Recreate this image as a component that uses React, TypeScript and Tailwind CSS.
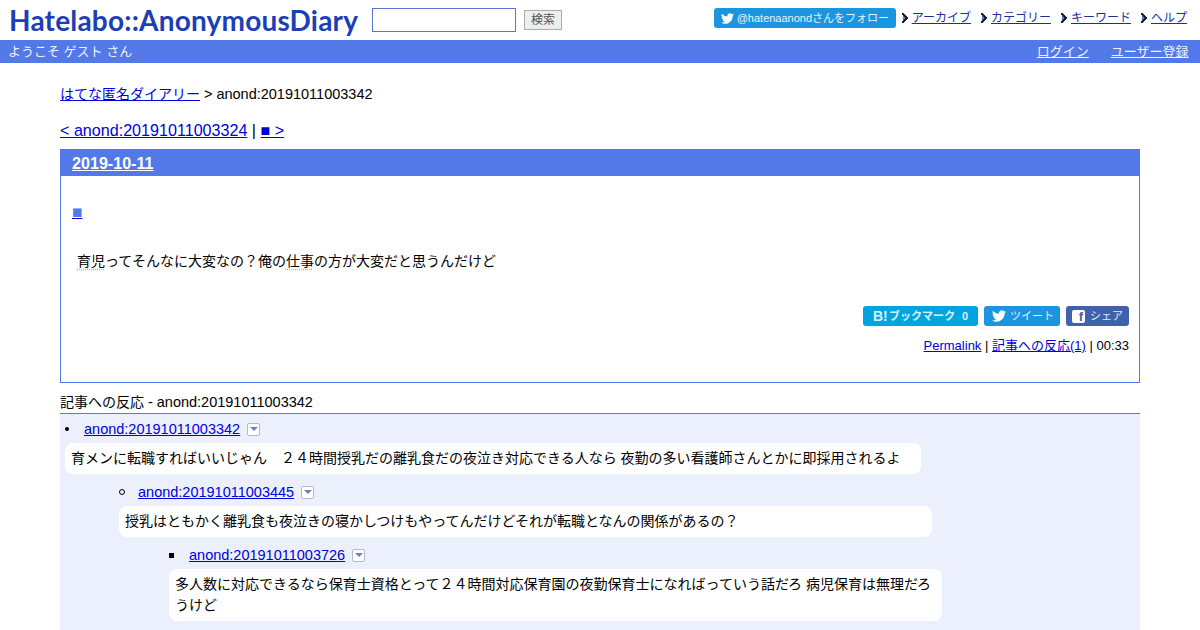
import React from "react";

const TwitterBird = ({ className }: { className?: string }) => (
  <svg viewBox="0 0 24 24" className={className} fill="currentColor">
    <path d="M23.95 4.57a10 10 0 0 1-2.82.77 4.96 4.96 0 0 0 2.16-2.72 9.9 9.9 0 0 1-3.12 1.19 4.92 4.92 0 0 0-8.38 4.48C7.69 8.1 4.07 6.13 1.64 3.16a4.82 4.82 0 0 0-.67 2.48c0 1.71.87 3.21 2.19 4.1a4.9 4.9 0 0 1-2.23-.62v.06a4.92 4.92 0 0 0 3.95 4.83 4.9 4.9 0 0 1-2.21.08 4.94 4.94 0 0 0 4.6 3.42A9.87 9.87 0 0 1 0 19.54a14 14 0 0 0 7.56 2.21c9.05 0 14-7.5 14-13.98 0-.21 0-.42-.02-.63a9.94 9.94 0 0 0 2.46-2.55z" />
  </svg>
);

// small pixel chevron used in front of the nav links
const Marker = () => (
  <svg viewBox="0 0 7 10" className="mr-[3px] h-[10px] w-[7px] shrink-0">
    <path d="M0 0h2v1h1v1h1v1h1v1h1v2h-1v1h-1v1h-1v1h-1v1h-2v-2h1v-1h1v-1h1v-2h-1v-1h-1v-1h-1z" fill="#222" />
    <path d="M1 3h1v1h1v2h-1v1h-1z" fill="#5279e7" />
  </svg>
);

const NavItem = ({ label }: { label: string }) => (
  <span className="flex items-center">
    <Marker />
    <a href="#" className="text-[#1a2f9c] underline">{label}</a>
  </span>
);

const Toggle = () => (
  <span className="ml-[7px] inline-flex h-[13px] w-[13px] items-center justify-center rounded-[2px] border border-[#b5b9cf] bg-white align-[-2px]">
    <span className="h-0 w-0 border-x-[4px] border-t-[4px] border-x-transparent border-t-[#6f7fc9]" />
  </span>
);

const ShareButton = ({ className, children }: { className: string; children: React.ReactNode }) => (
  <a href="#" className={`flex h-5 items-center rounded-[3px] text-white/85 ${className}`}>
    {children}
  </a>
);

const Keyword = ({ children }: { children: React.ReactNode }) => (
  <span className="underline decoration-[#bbb] decoration-dotted underline-offset-[3px]">{children}</span>
);

const Comment = ({ id, bullet, bulletWidth, children, className }: { id: string; bullet: React.ReactNode; bulletWidth: string; children: React.ReactNode; className: string }) => (
  <div className={className}>
    <div className="flex h-[20px] items-center">
      <span className={`flex shrink-0 items-center ${bulletWidth}`}>{bullet}</span>
      <a href="#" className="text-[14.5px] text-[#0000dd] underline">{id}</a>
      <Toggle />
    </div>
    {children}
  </div>
);

export default function App() {
  return (
    <div className="h-[630px] w-[1200px] overflow-hidden bg-white font-['Liberation_Sans','Noto_Sans_CJK_JP',sans-serif] text-[14px] leading-[20px] text-black">
      <header className="flex h-10 items-center justify-between pl-[9px] pr-[13px]">
        <div className="flex items-center">
          <a href="#" className="w-[350px] whitespace-nowrap font-['Lato',sans-serif] text-[28px] font-bold leading-[40px] tracking-[0.2px] text-[#1c3fb7]">
            Hatelabo::AnonymousDiary
          </a>
          <input className="ml-[13px] h-6 w-36 border border-[#5c76c9] bg-white" aria-label="search" />
          <button className="ml-2 flex h-5 w-[38px] items-center justify-center border border-[#aaa] bg-[#eee] text-[12px] text-[#555]">検索</button>
        </div>
        <div className="mb-[4px] flex items-center text-[12px]">
          <a href="#" className="mr-[6px] flex h-5 w-[182px] items-center rounded-[3px] bg-[#1b95e0] pl-[7px] text-[11px] text-white/90">
            <TwitterBird className="mr-[3px] h-[13px] w-[13px] text-white" />
            <span className="whitespace-nowrap">@hatenaanondさんをフォロー</span>
          </a>
          <div className="flex gap-[10px]">
            <NavItem label="アーカイブ" />
            <NavItem label="カテゴリー" />
            <NavItem label="キーワード" />
            <NavItem label="ヘルプ" />
          </div>
        </div>
      </header>

      <div className="flex h-[23px] items-center justify-between bg-[#5279e7] pl-2 pr-[11.5px] text-[13px] text-[#eef2ff]">
        <span>ようこそ ゲスト さん</span>
        <div className="flex gap-[22px]">
          <a href="#" className="underline">ログイン</a>
          <a href="#" className="underline">ユーザー登録</a>
        </div>
      </div>

      <main className="px-[60px] pt-5">
        <div className="pt-[1px]">
          <a href="#" className="text-[#0000dd] underline">はてな匿名ダイアリー</a> <span className="text-[14.5px]">&gt; anond:20191011003342</span>
        </div>
        <div className="mt-4 text-[16.13px] leading-[20px]">
          <a href="#" className="text-[#0000dd] underline">&lt; anond:20191011003324</a> | <a href="#" className="text-[#0000dd] underline">■ &gt;</a>
        </div>

        <section className="mt-[9px] h-[234px] border border-[#5279e7]">
          <h2 className="h-[26px] bg-[#5279e7] pl-[11px] text-[16.13px] font-bold leading-[26px] text-white">
            <a href="#" className="underline">2019-10-11</a>
          </h2>
          <div className="pl-[11px] pr-[10px]">
            <div className="mt-[26px]">
              <a href="#" className="font-['Noto_Sans_CJK_JP',sans-serif] text-[10.5px] text-[#5279e7] underline decoration-[#0000dd]">■</a>
            </div>
            <p className="mt-[28px] pl-[5px]">
              <Keyword>育児</Keyword>ってそんなに大変なの？俺の<Keyword>仕事</Keyword>の方が大変だと思うんだけど
            </p>
            <div className="mt-[35px] flex justify-end gap-[6px] text-[11px]">
              <ShareButton className="w-[115px] bg-[#00a4de] pl-[10px] font-bold text-white">
                <span className="w-[16px] text-[14px]">B!</span>
                <span>ブックマーク</span>
                <span className="ml-[7px]">0</span>
              </ShareButton>
              <ShareButton className="w-[76px] gap-[4px] bg-[#1b95e0] pl-2">
                <TwitterBird className="h-[14px] w-[14px] text-white" /><span>ツイート</span>
              </ShareButton>
              <ShareButton className="w-[63px] gap-[5px] bg-[#3f62ab] pl-[6px]">
                <span className="flex h-[13px] w-[13px] items-end justify-end rounded-[2px] bg-white pr-[2px] text-[13px] font-bold leading-[12px] text-[#3f62ab]">f</span>
                <span>シェア</span>
              </ShareButton>
            </div>
            <div className="mt-[10px] text-right text-[13px]">
              <a href="#" className="text-[#0000dd] underline">Permalink</a> | <a href="#" className="text-[#0000dd] underline">記事への反応(1)</a> | 00:33
            </div>
          </div>
        </section>

        <h3 className="mt-[9px] h-[22px] border-b border-[#5279e7] leading-[20px]">
          記事への反応 <span className="text-[14.5px]">- anond:20191011003342</span>
        </h3>
        <div className="bg-[#ebf0fc] pb-4 pl-[5px] pt-[5px] leading-[21px]">
          <Comment id="anond:20191011003342" className="" bulletWidth="w-[19px]" bullet={<span className="h-1 w-1 rounded-full bg-black" />}>
            <div className="mt-[4px] w-[856px] rounded-lg bg-white px-[6px] py-[5px]">
              育メンに転職すればいいじゃん　２４時間授乳だの離乳食だの夜泣き対応できる人なら 夜勤の多い看護師さんとかに即採用されるよ
            </div>
            <Comment id="anond:20191011003445" className="ml-[54px] mt-[8px]" bulletWidth="w-[19px]" bullet={<span className="h-[6px] w-[6px] rounded-full border border-black" />}>
              <div className="mt-[4px] w-[813px] rounded-lg bg-white px-[6px] py-[5px]">
                授乳はともかく離乳食も夜泣きの寝かしつけもやってんだけどそれが転職となんの関係があるの？
              </div>
              <Comment id="anond:20191011003726" className="ml-[50px] mt-[8px]" bulletWidth="w-5" bullet={<span className="h-[5px] w-[5px] bg-black" />}>
                <div className="mt-1 w-[773px] rounded-lg bg-white px-[6px] py-[5px]">
                  多人数に対応できるなら保育士資格とって２４時間対応保育園の夜勤保育士になればっていう話だろ 病児保育は無理だろうけど
                </div>
              </Comment>
            </Comment>
          </Comment>
        </div>
      </main>
    </div>
  );
}
